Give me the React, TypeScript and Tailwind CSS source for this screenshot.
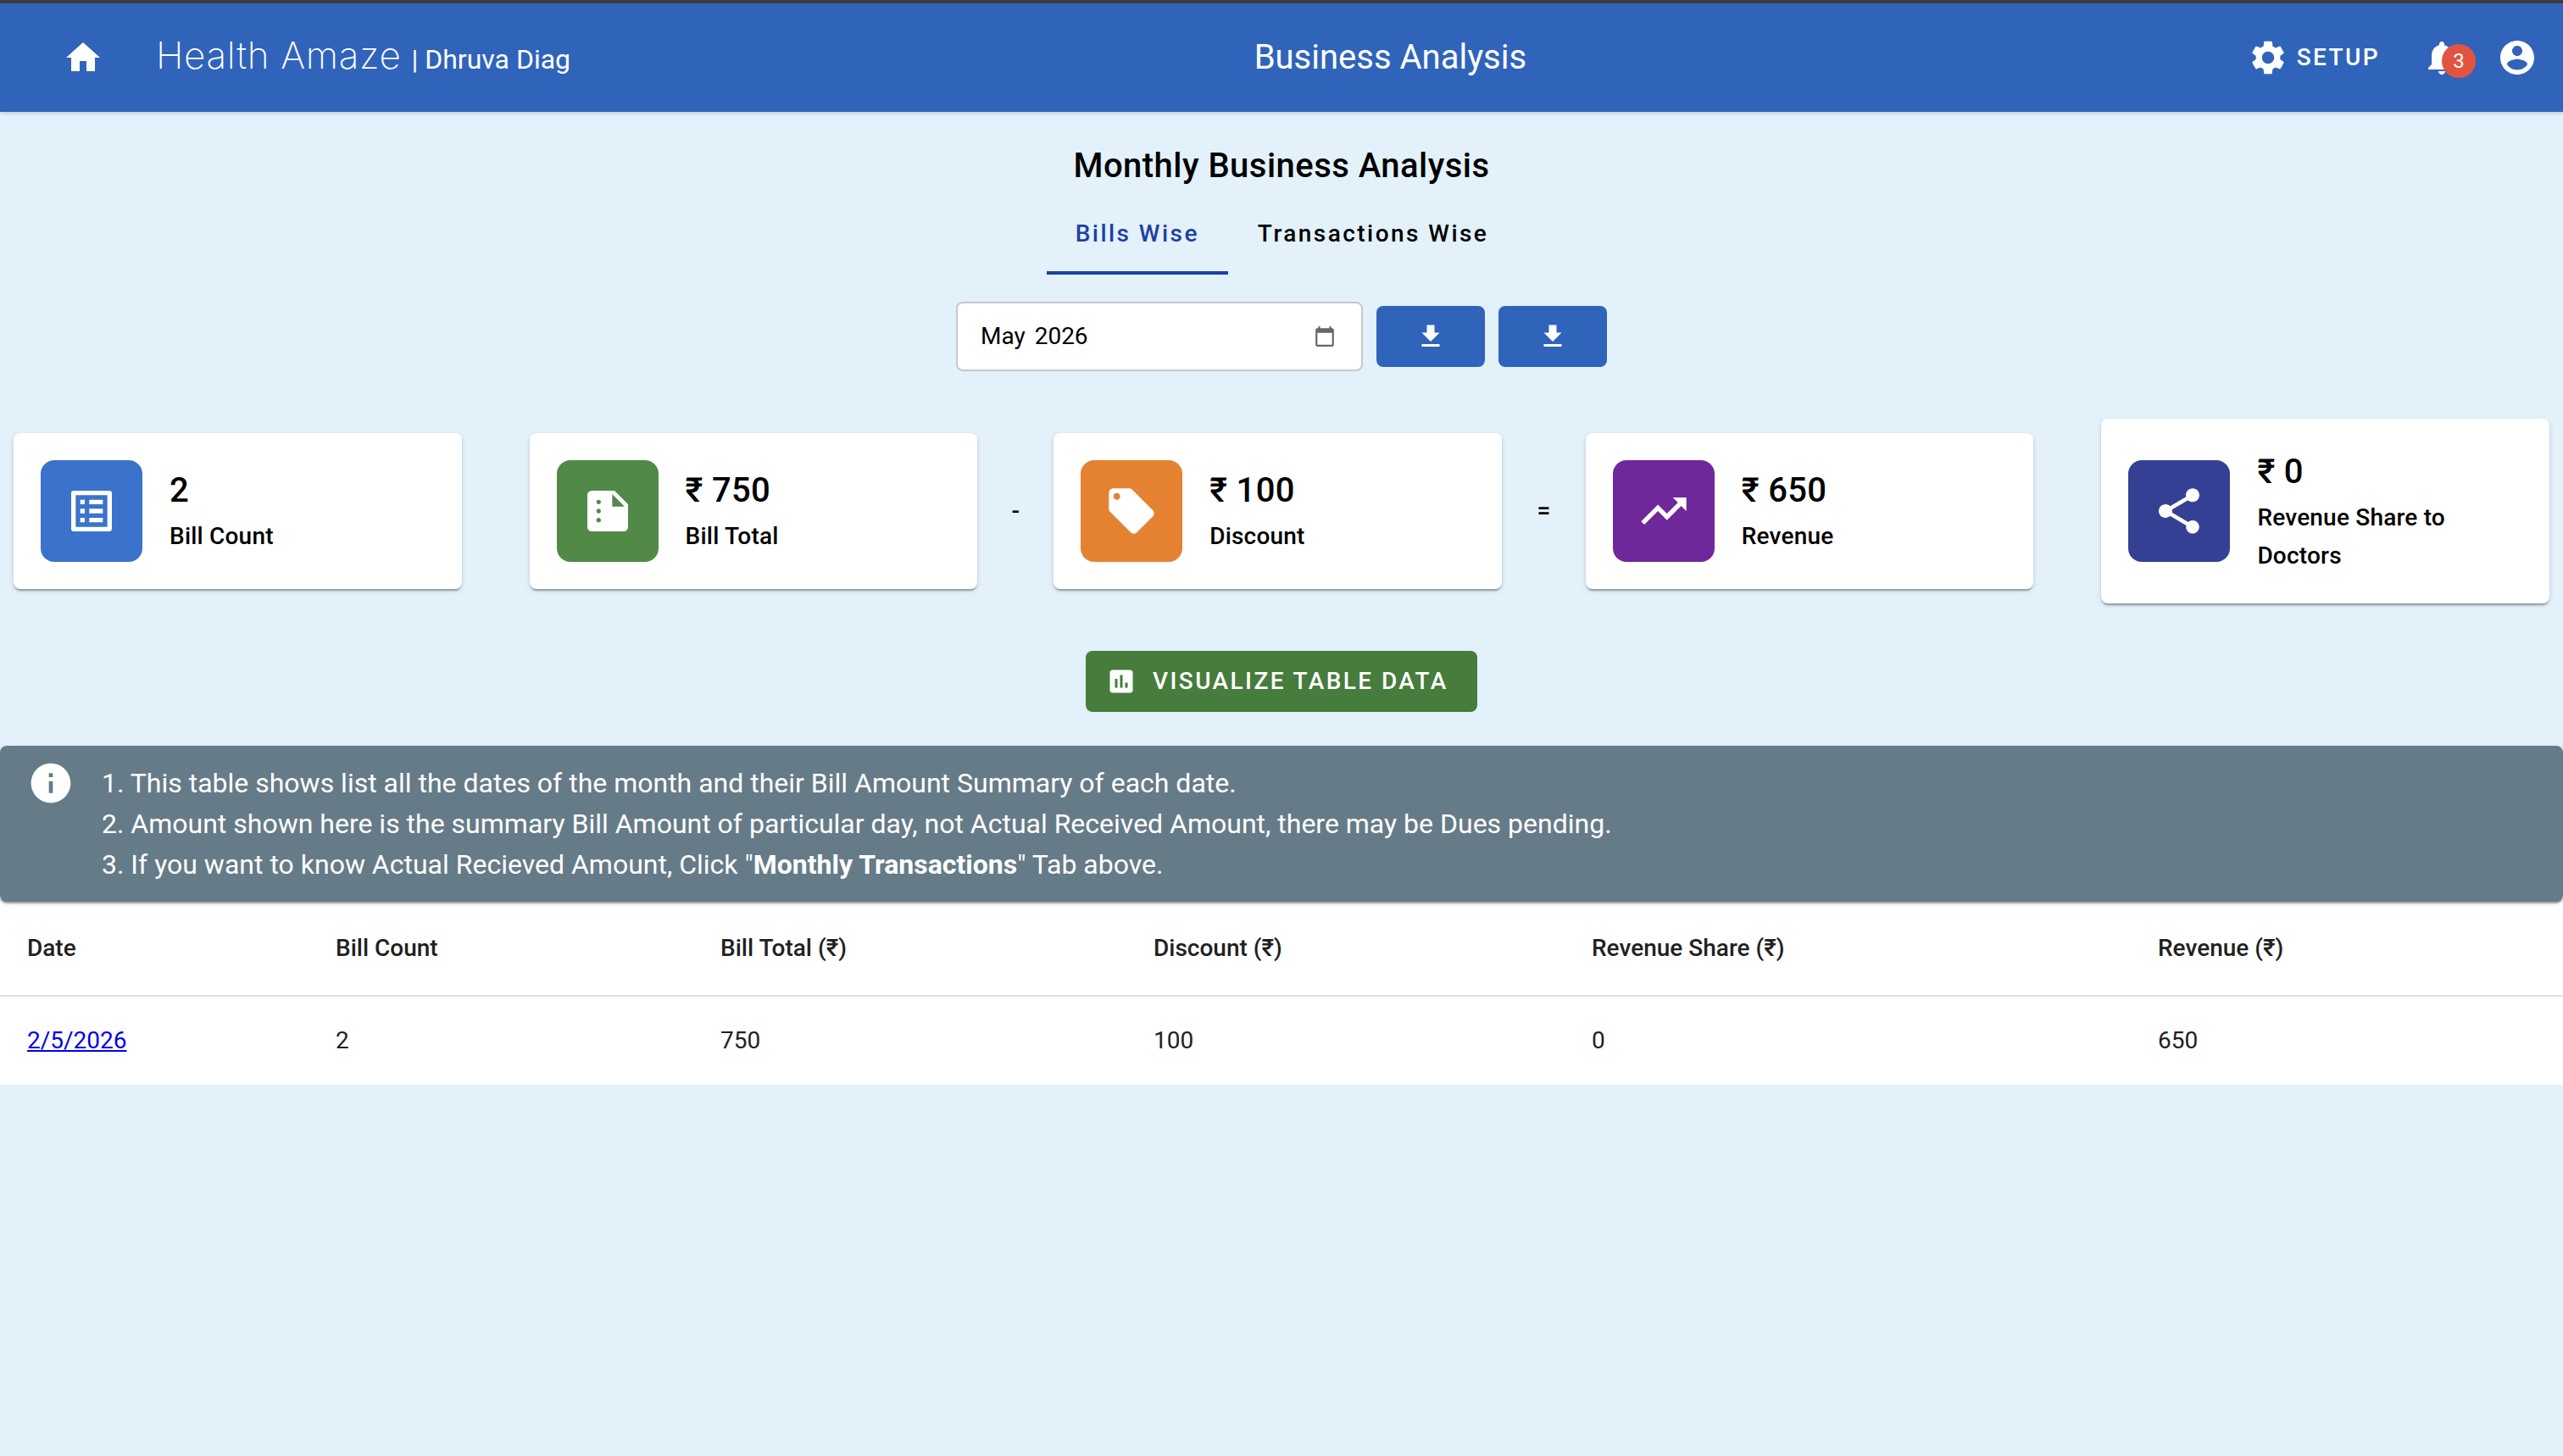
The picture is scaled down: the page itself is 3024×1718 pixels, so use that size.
import React from "react";

const P: Record<string, string> = {
  home: "M10 20v-6h4v6h5v-8h3L12 3 2 12h3v8z",
  gear: "M19.14 12.94c.04-.3.06-.61.06-.94 0-.32-.02-.64-.07-.94l2.03-1.58c.18-.14.23-.41.12-.61l-1.92-3.32c-.12-.22-.37-.29-.59-.22l-2.39.96c-.5-.38-1.03-.7-1.62-.94l-.36-2.54c-.04-.24-.24-.41-.48-.41h-3.84c-.24 0-.43.17-.47.41l-.36 2.54c-.59.24-1.13.57-1.62.94l-2.39-.96c-.22-.08-.47 0-.59.22L2.74 8.87c-.12.21-.08.47.12.61l2.03 1.58c-.05.3-.09.63-.09.94s.02.64.07.94l-2.03 1.58c-.18.14-.23.41-.12.61l1.92 3.32c.12.22.37.29.59.22l2.39-.96c.5.38 1.03.7 1.62.94l.36 2.54c.05.24.24.41.48.41h3.84c.24 0 .44-.17.47-.41l.36-2.54c.59-.24 1.13-.56 1.62-.94l2.39.96c.22.08.47 0 .59-.22l1.92-3.32c.12-.22.07-.47-.12-.61l-2.01-1.58zM12 15.6c-1.98 0-3.6-1.62-3.6-3.6s1.62-3.6 3.6-3.6 3.6 1.62 3.6 3.6-1.62 3.6-3.6 3.6z",
  bell: "M12 22c1.1 0 2-.9 2-2h-4c0 1.1.89 2 2 2zm6-6v-5c0-3.07-1.64-5.64-4.5-6.32V4c0-.83-.67-1.5-1.5-1.5s-1.5.67-1.5 1.5v.68C7.63 5.36 6 7.92 6 11v5l-2 2v1h16v-1l-2-2z",
  account: "M12 2C6.48 2 2 6.48 2 12s4.48 10 10 10 10-4.48 10-10S17.52 2 12 2zm0 3c1.66 0 3 1.34 3 3s-1.34 3-3 3-3-1.34-3-3 1.34-3 3-3zm0 14.2c-2.5 0-4.71-1.28-6-3.22.03-1.99 4-3.08 6-3.08 1.99 0 5.97 1.09 6 3.08-1.29 1.94-3.5 3.22-6 3.22z",
  download: "M19 9h-4V3H9v6H5l7 7 7-7zM5 18v2h14v-2H5z",
  list: "M19 5v14H5V5h14m1.1-2H3.9c-.5 0-.9.4-.9.9v16.2c0 .4.4.9.9.9h16.2c.4 0 .9-.5.9-.9V3.9c0-.5-.5-.9-.9-.9zM11 7h6v2h-6V7zm0 4h6v2h-6v-2zm0 4h6v2h-6zM7 7h2v2H7zm0 4h2v2H7zm0 4h2v2H7z",
  summarize: "M15 3H5c-1.1 0-1.99.9-1.99 2L3 19c0 1.1.89 2 1.99 2H19c1.1 0 2-.9 2-2V9l-6-6zM8 17c-.55 0-1-.45-1-1s.45-1 1-1 1 .45 1 1-.45 1-1 1zm0-4c-.55 0-1-.45-1-1s.45-1 1-1 1 .45 1 1-.45 1-1 1zm0-4c-.55 0-1-.45-1-1s.45-1 1-1 1 .45 1 1-.45 1-1 1zm6 1V4.5l5.5 5.5H14z",
  tag: "M21.41 11.58l-9-9C12.05 2.22 11.55 2 11 2H4c-1.1 0-2 .9-2 2v7c0 .55.22 1.05.59 1.42l9 9c.36.36.86.58 1.41.58.55 0 1.05-.22 1.41-.59l7-7c.37-.36.59-.86.59-1.41 0-.55-.23-1.06-.59-1.42zM5.5 7C4.67 7 4 6.33 4 5.5S4.67 4 5.5 4 7 4.67 7 5.5 6.33 7 5.5 7z",
  trend: "M16 6l2.29 2.29-4.88 4.88-4-4L2 16.59 3.41 18l6-6 4 4 6.3-6.29L22 12V6z",
  share: "M18 16.08c-.76 0-1.44.3-1.96.77L8.91 12.7c.05-.23.09-.46.09-.7s-.04-.47-.09-.7l7.05-4.11c.54.5 1.25.81 2.04.81 1.66 0 3-1.34 3-3s-1.34-3-3-3-3 1.34-3 3c0 .24.04.47.09.7L8.04 9.81C7.5 9.31 6.79 9 6 9c-1.66 0-3 1.34-3 3s1.34 3 3 3c.79 0 1.5-.31 2.04-.81l7.12 4.16c-.05.21-.08.43-.08.65 0 1.61 1.31 2.92 2.92 2.92 1.61 0 2.92-1.31 2.92-2.92s-1.31-2.92-2.92-2.92z",
  poll: "M19 3H5c-1.1 0-2 .9-2 2v14c0 1.1.9 2 2 2h14c1.1 0 2-.9 2-2V5c0-1.1-.9-2-2-2zM9 17H7v-7h2v7zm4 0h-2V7h2v10zm4 0h-2v-4h2v4z",
  info: "M12 2C6.48 2 2 6.48 2 12s4.48 10 10 10 10-4.48 10-10S17.52 2 12 2zm1 15h-2v-6h2v6zm0-8h-2V7h2v2z",
  calendar: "M20 3h-1V1h-2v2H7V1H5v2H4c-1.1 0-2 .9-2 2v16c0 1.1.9 2 2 2h16c1.1 0 2-.9 2-2V5c0-1.1-.9-2-2-2zm0 18H4V8h16v13z",
};

function Icon({ name, className }: { name: string; className: string }) {
  return (
    <svg viewBox="0 0 24 24" fill="currentColor" className={className} aria-hidden="true">
      <path d={P[name]} />
    </svg>
  );
}

function Card({
  icon,
  color,
  value,
  label,
  tall,
}: {
  icon: string;
  color: string;
  value: string;
  label: string;
  tall?: boolean;
}) {
  return (
    <div
      className={`flex-1 flex items-center gap-8 rounded-lg bg-white px-8 shadow-[0_4px_2px_-2px_rgba(0,0,0,0.2),0_2px_2px_0_rgba(0,0,0,0.14),0_2px_6px_0_rgba(0,0,0,0.12)] ${
        tall ? "py-[33px]" : "py-8"
      }`}
    >
      <div className={`flex h-[120px] w-[120px] shrink-0 items-center justify-center rounded-2xl text-white ${color}`}>
        <Icon name={icon} className="h-16 w-16" />
      </div>
      <div className="min-w-0">
        <div className="text-[40px] leading-[60px] font-medium tracking-[0.3px] text-black">{value}</div>
        <div className="mt-[2px] text-[28px] leading-[44.8px] font-medium tracking-[0.2px] text-black">{label}</div>
      </div>
    </div>
  );
}

function DownloadButton() {
  return (
    <button className="flex h-[72px] w-32 items-center justify-center rounded-lg bg-[#3064BA] text-white">
      <Icon name="download" className="h-9 w-9" />
    </button>
  );
}

const th = "px-8 text-left text-[28px] font-medium text-[#212121] border-b-2 border-[#e0e0e0] h-[111px]";
const td = "px-8 text-left text-[28px] font-normal text-[#212121] h-[105px]";

export default function App() {
  return (
    <div className="min-h-[1718px] bg-[#E3F1FB] font-[family-name:Roboto,sans-serif] text-black">
      <div className="h-1 bg-[#3c3c3c]" />
      <header className="flex h-32 items-center bg-[#3064BA] pl-[74px] pr-[30px] text-white shadow-[0_2px_4px_rgba(0,0,0,0.15)]">
        <Icon name="home" className="h-12 w-12 shrink-0" />
        <div className="mb-[7px] ml-[62px] flex items-baseline whitespace-nowrap">
          <span className="font-[family-name:Inter,sans-serif] text-[44px] font-[250] tracking-[0.65px]">Health Amaze</span>
          <span className="ml-3 text-[32px]">| Dhruva Diag</span>
        </div>
        <div className="flex-1 pr-[44px] text-center text-[40px]">Business Analysis</div>
        <div className="flex items-center gap-[10px]">
          <Icon name="gear" className="h-12 w-12" />
          <span className="text-[28px] font-[480] tracking-[2.4px]">SETUP</span>
        </div>
        <div className="relative ml-[49px] h-12 w-12">
          <Icon name="bell" className="h-12 w-12" />
          <span className="absolute -right-4 top-2 flex h-10 w-10 items-center justify-center rounded-full bg-[#E25341] text-[24px]">
            3
          </span>
        </div>
        <Icon name="account" className="ml-[41px] h-12 w-12" />
      </header>

      <main>
        <h1 className="mt-[34px] text-center text-[40px] leading-[60px] font-medium tracking-[0.46px]">Monthly Business Analysis</h1>

        <div className="ml-[2px] mt-[2px] flex justify-center">
          <div className="flex h-24 items-center border-b-4 border-[#1E40A0] px-[34px] pt-1 text-[28px] font-medium tracking-[2.45px] text-[#1E40A0]">
            Bills Wise
          </div>
          <div className="flex h-24 items-center px-[35px] text-[28px] font-medium tracking-[2.45px] text-black">
            Transactions Wise
          </div>
        </div>

        <div className="mt-8 flex items-center justify-center gap-4">
          <div className="flex h-[82px] w-[480px] items-center justify-between rounded-lg border-2 border-[#c8c8c8] bg-white pl-[27px] pr-[30px] text-[28px]">
            <span className="[word-spacing:4px]">May 2026</span>
            <Icon name="calendar" className="h-[26px] w-[26px] text-[#666666]" />
          </div>
          <DownloadButton />
          <DownloadButton />
        </div>

        <div className="mt-14 flex items-center gap-10 px-4">
          <Card icon="list" color="bg-[#3B73CC]" value="2" label="Bill Count" />
          <span />
          <Card icon="summarize" color="bg-[#518A47]" value="₹ 750" label="Bill Total" />
          <span className="w-[10px] text-center text-[28px] font-medium">-</span>
          <Card icon="tag" color="bg-[#E58232]" value="₹ 100" label="Discount" />
          <span className="w-[19px] text-center text-[28px] font-medium">=</span>
          <Card icon="trend" color="bg-[#6F2899]" value="₹ 650" label="Revenue" />
          <span />
          <Card icon="share" color="bg-[#354095]" value="₹ 0" label="Revenue Share to Doctors" tall />
        </div>

        <div className="mt-14 flex justify-center">
          <button className="flex h-[72px] w-[462px] items-center gap-[19px] rounded-lg bg-[#467C3C] pl-6 text-[28px] font-[460] tracking-[2.4px] text-white">
            <Icon name="poll" className="h-9 w-9" />
            VISUALIZE TABLE DATA
          </button>
        </div>

        <div className="relative z-10 mt-10 flex rounded-lg bg-[#667B88] py-5 pl-8 text-[32px] leading-[48px] text-white shadow-[0_4px_2px_-2px_rgba(0,0,0,0.2),0_2px_2px_0_rgba(0,0,0,0.14),0_2px_6px_0_rgba(0,0,0,0.12)]">
          <Icon name="info" className="-mt-1 h-14 w-14 shrink-0" />
          <div className="ml-8">
            <div>1. This table shows list all the dates of the month and their Bill Amount Summary of each date.</div>
            <div>2. Amount shown here is the summary Bill Amount of particular day, not Actual Received Amount, there may be Dues pending.</div>
            <div>
              3. If you want to know Actual Recieved Amount, Click "<b className="font-bold">Monthly Transactions</b>" Tab above.
            </div>
          </div>
        </div>

        <table className="w-full table-fixed border-collapse bg-white">
          <thead>
            <tr>
              <th className={`${th} w-[364px]`}>Date</th>
              <th className={`${th} w-[454px]`}>Bill Count</th>
              <th className={`${th} w-[511px]`}>Bill Total (₹)</th>
              <th className={`${th} w-[517px]`}>Discount (₹)</th>
              <th className={`${th} w-[668px]`}>Revenue Share (₹)</th>
              <th className={th}>Revenue (₹)</th>
            </tr>
          </thead>
          <tbody>
            <tr>
              <td className={td}>
                <a href="#" className="text-[#0000EE] underline">2/5/2026</a>
              </td>
              <td className={td}>2</td>
              <td className={td}>750</td>
              <td className={td}>100</td>
              <td className={td}>0</td>
              <td className={td}>650</td>
            </tr>
          </tbody>
        </table>
      </main>
    </div>
  );
}
